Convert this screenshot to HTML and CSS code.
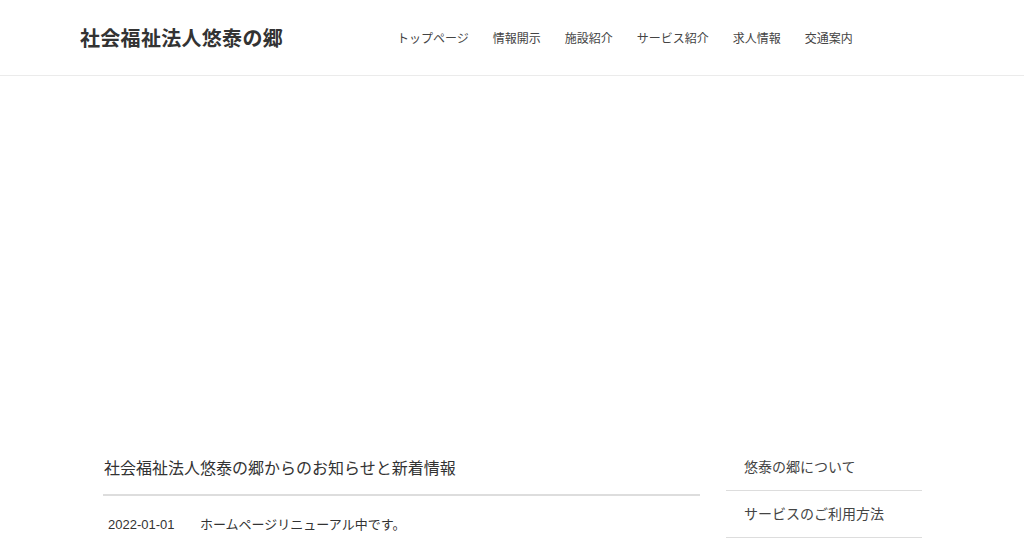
FILE: index.html
```html
<!DOCTYPE html>
<html lang="ja">
<head>
<meta charset="utf-8">
<title>社会福祉法人悠泰の郷</title>
<link rel="stylesheet" href="styles.css">
</head>
<body>
<header class="site-header">
  <div class="header-inner">
    <div class="logo">社会福祉法人悠泰の郷</div>
    <nav class="global-nav">
      <a href="#">トップページ</a>
      <a href="#">情報開示</a>
      <a href="#">施設紹介</a>
      <a href="#">サービス紹介</a>
      <a href="#">求人情報</a>
      <a href="#">交通案内</a>
    </nav>
  </div>
</header>
<div class="hero"></div>
<div class="content">
  <main class="main">
    <h2 class="news-title">社会福祉法人悠泰の郷からのお知らせと新着情報</h2>
    <ul class="news-list">
      <li><span class="date">2022-01-01</span><span class="news-text">ホームページリニューアル中です。</span></li>
    </ul>
  </main>
  <aside class="sidebar">
    <ul class="side-menu">
      <li>悠泰の郷について</li>
      <li>サービスのご利用方法</li>
    </ul>
  </aside>
</div>
</body>
</html>
```
FILE: styles.css
```css
html, body {
  margin: 0;
  padding: 0;
  background: #fff;
  font-family: "Liberation Sans", Arial, "Noto Sans CJK JP", sans-serif;
  color: #333;
}
.site-header {
  height: 75px;
  border-bottom: 1px solid #ebebeb;
}
.header-inner {
  display: flex;
  align-items: center;
  height: 100%;
  padding-left: 80px;
}
.logo {
  font-size: 20px;
  line-height: 24px;
  font-weight: bold;
  color: #333;
  letter-spacing: 0.3px;
  width: 317px;
  margin-top: 2px;
}
.global-nav {
  display: flex;
  gap: 24px;
  margin-top: 2px;
}
.global-nav a {
  font-size: 12px;
  line-height: 16px;
  color: #444;
  text-decoration: none;
}
.hero {
  height: 368px;
}
.content {
  display: flex;
  padding-left: 103px;
  gap: 26px;
}
.main {
  width: 597px;
}
.news-title {
  margin: 0;
  font-size: 16px;
  line-height: 20px;
  font-weight: normal;
  color: #333;
  padding: 15px 0 15px 1px;
  border-bottom: 2px solid #ddd;
}
.news-list {
  list-style: none;
  margin: 0;
  padding: 20px 0 0 5px;
  font-size: 13px;
  line-height: 18px;
}
.news-list li {
  display: flex;
}
.date {
  width: 92px;
  color: #333;
}
.sidebar {
  width: 196px;
}
.side-menu {
  list-style: none;
  margin: 0;
  padding: 0;
}
.side-menu li {
  font-size: 14px;
  line-height: 16px;
  color: #444;
  padding: 15px 0 15px 18px;
  border-bottom: 1px solid #ddd;
}
```
